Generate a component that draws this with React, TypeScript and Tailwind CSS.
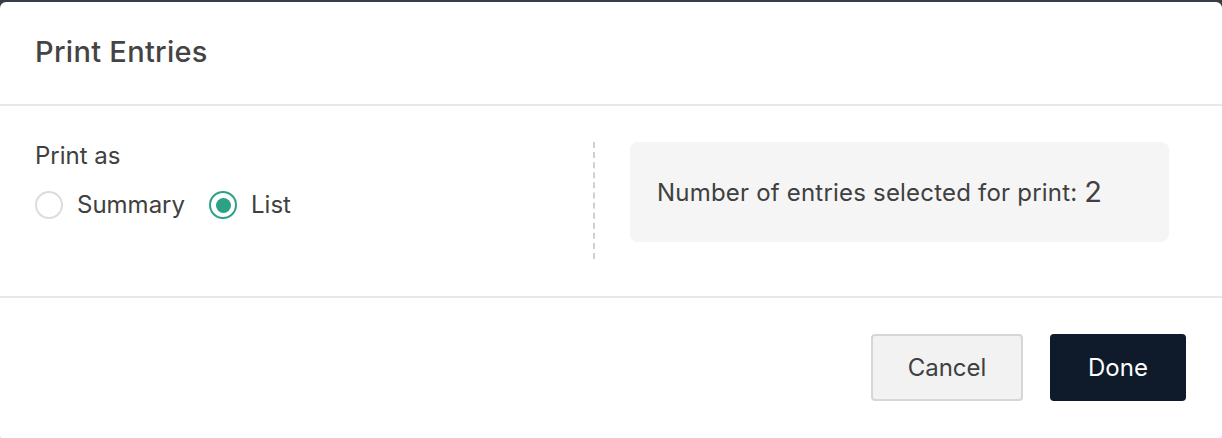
import { useState } from 'react';

type PrintMode = 'summary' | 'list'

export default function App() {
  const [mode, setMode] = useState<PrintMode>('list');
  const selectedCount = 2;

  return (
    <div className="w-[1222px] h-[438px] bg-[#363d45] pt-[2px] overflow-hidden" style={{ fontFamily: 'Inter, "Noto Sans", sans-serif' }}>
      <div className="h-[440px] bg-white rounded-[6px] flex flex-col text-[#404040]">
        {/* cabecera */}
        <div className="h-[104px] px-[35px] pb-[3px] flex items-center border-b-2 border-[#e8e8e8]">
          <h2 className="text-[29px] font-medium tracking-[0.3px] text-[#444]">Print Entries</h2>
        </div>

        {/* cuerpo */}
        <div className="h-[192px] flex border-b-2 border-[#e8e8e8] pt-[36px]">
          <div className="w-[593px] pl-[35px]">
            <p className="text-[24px] leading-[28px]">Print as</p>
            <div className="flex items-center gap-[24px] mt-[21px]">
              <RadioOption label="Summary" checked={mode === 'summary'} onSelect={() => setMode('summary')} />
              <RadioOption label="List" checked={mode === 'list'} onSelect={() => setMode('list')} />
            </div>
          </div>
          <div className="w-0 h-[117px] border-l-2 border-dashed border-[#d0d0d0]" />
          <div className="ml-[35px] w-[539px] h-[100px] bg-[#f5f5f5] rounded-[8px] flex items-center px-[27px]">
            <p className="text-[24px] tracking-[0.2px]">
              Number of entries selected for print: <span className="text-[29px] align-[-1px]">{selectedCount}</span>
            </p>
          </div>
        </div>

        {/* pie */}
        <div className="flex justify-end items-start gap-[27px] pr-[36px] pt-[36px]">
          <button className="w-[152px] h-[67px] bg-[#f2f2f2] border-2 border-[#d6d6d6] rounded-[4px] text-[24px] text-[#404040]">
            Cancel
          </button>
          <button className="w-[136px] h-[67px] bg-[#0f1a2b] rounded-[4px] text-[24px] text-white">
            Done
          </button>
        </div>
      </div>
    </div>
  )
}

type RadioProps = {
  label: string,
  checked: boolean,
  onSelect: () => void
}

function RadioOption({ label, checked, onSelect }: RadioProps) {
  return (
    <label className="flex items-center gap-[14px] cursor-pointer" onClick={onSelect}>
      <span
        className={`w-[28px] h-[28px] rounded-full border-2 flex items-center justify-center bg-white ${checked ? 'border-[#2ba286]' : 'border-[#dcdcdc]'}`}
      >
        {checked && <span className="w-[15px] h-[15px] rounded-full bg-[#2ba286]" />}
      </span>
      <span className="text-[24px] leading-[28px]">{label}</span>
    </label>
  )
}
